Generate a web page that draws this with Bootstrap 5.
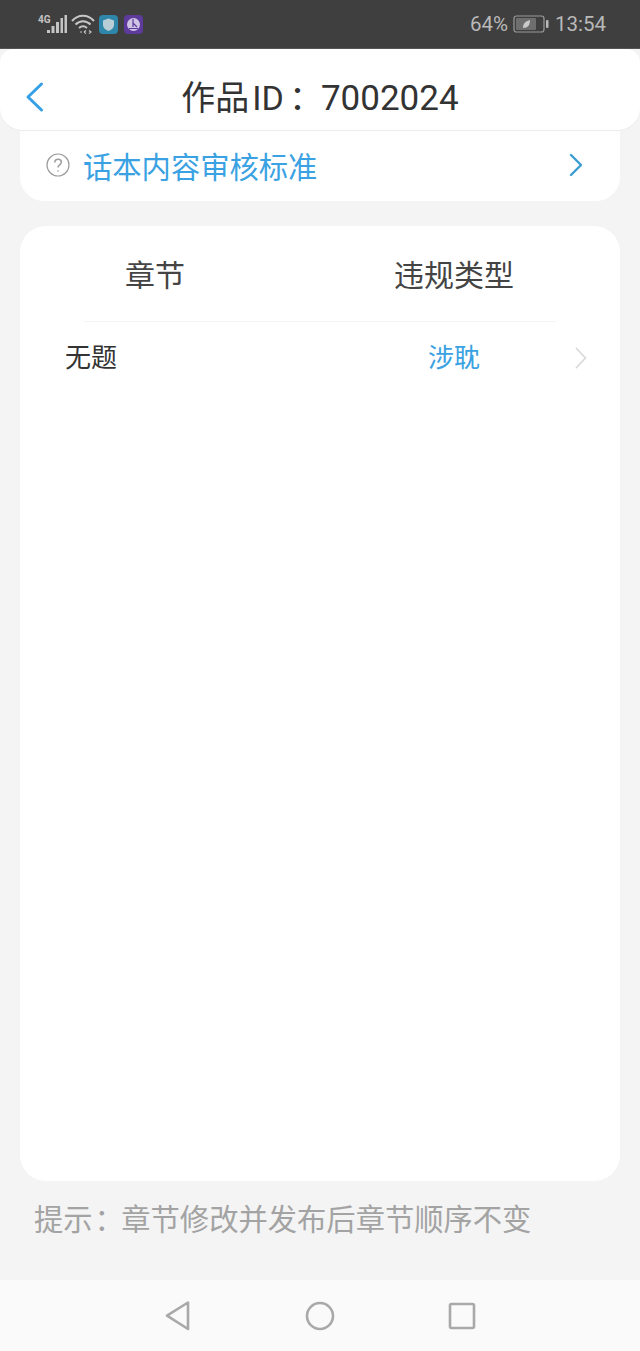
<!DOCTYPE html>
<html lang="zh">
<head>
<meta charset="utf-8">
<title>作品ID</title>
<link href="https://cdn.jsdelivr.net/npm/bootstrap@5.3.0/dist/css/bootstrap.min.css" rel="stylesheet">
<style>
html,body{height:1351px;overflow:hidden}
body{background:#f4f4f4;font-family:Roboto,"Noto Sans CJK SC",sans-serif;color:#333;width:640px}
.phone-status{height:49px;background:#3f3f3f;color:#b9b9b9;padding:0 34px 0 38px;border-bottom:1px solid #555}
.status-4g{font-size:10px;font-weight:700;line-height:1;align-self:flex-start;margin-top:15px;margin-right:-6px;color:#c4c4c4}
.status-pct{font-size:20.500px;line-height:1}
.status-time{font-size:20.500px;line-height:1;margin-left:6px}
.status-wifi{margin-left:2px}
.status-shield{margin-left:4px}
.status-app{margin-left:6px}
.status-batt{margin-left:5px}
.title-bar{height:81px;background:#fff;border-radius:14px 14px 22px 22px;position:relative;z-index:2;box-shadow:0 1px 0 #ececec;padding-top:18px}
.title-back{position:absolute;left:25px;top:32px}
.title-text{font-size:34px;line-height:1;color:#333}
.title-id{margin-left:3px}
.title-colon{font-feature-settings:"palt";margin:0 15px 0 5px}
.title-num{font-size:35px}
.notice-row{height:71px;margin:0 20px;background:#fff;border-radius:0 0 24px 24px;padding:0 37px 2px 26px}
.notice-text{font-size:29.300px;line-height:1;color:#3aa2e2;margin-left:13px;padding-top:9px}
.panel-main{margin:25px 20px 0;height:955px;background:#fff;border-radius:26px}
.panel-head{height:96px;margin:0 64px 0 64px;padding:5px 42px 0 41px;border-bottom:1px solid #f4f4f4;font-size:30px;line-height:1;color:#444}
.panel-row{height:72px;padding:0 33px 0 45px;font-size:26px;line-height:1;color:#333}
.violate-type{color:#3aa2e2;margin-left:auto;margin-right:95px}
.hint-text{font-size:29.300px;line-height:1;color:#a3a3a3;padding:25px 0 0 34px;height:99px;white-space:nowrap}
.hint-colon{font-feature-settings:"palt";margin:0 12px 0 2px}
.nav-bottom{height:71px;background:#fafafa;padding-left:163px}
.nav-home{margin:0 113px 0 114px}
</style>
</head>
<body>
<div class="phone-status d-flex align-items-center">
  <span class="status-4g">4G</span>
  <svg width="24" height="22" viewBox="4 0 24 22" fill="#c4c4c4"><rect x="6" y="17" width="3" height="3"/><rect x="10.500" y="13" width="3" height="7"/><rect x="15" y="9" width="3" height="11"/><rect x="19.500" y="5" width="2.500" height="15"/><rect x="23.500" y="2" width="2.500" height="18"/></svg>
  <svg class="status-wifi" width="24" height="22" viewBox="0 0 24 22" fill="none" stroke="#c8c8c8" stroke-width="2"><path d="M1 8C7 1 17 1 23 8"/><path d="M4.500 11.500C9 7 15 7 19.500 11.500"/><path d="M8 15C10.500 12.800 13.500 12.800 16 15"/><path d="M9 19h2M13 19l2-1.500M13 19l2 1.500M18 17.500l2 1.500-2 1.500" stroke-width="1.200"/></svg>
  <svg class="status-shield" width="19" height="19" viewBox="0 0 19 19"><rect width="19" height="19" rx="4" fill="#2e87aa"/><path d="M9.500 3.500l5.500 2v4.500c0 3-2.500 5-5.500 6-3-1-5.500-3-5.500-6V5.500z" fill="#b9cdd6"/></svg>
  <svg class="status-app" width="19" height="19" viewBox="0 0 19 19"><rect width="19" height="19" rx="4" fill="#5d3a9c"/><circle cx="9.500" cy="9.500" r="6.500" fill="#cfc4e4"/><path d="M9 4v8M5 13.500h9M9 8l4 4" stroke="#5d3a9c" stroke-width="1.200" fill="none"/></svg>
  <span class="status-pct ms-auto">64%</span>
  <svg class="status-batt" width="36" height="18" viewBox="0 0 36 18"><rect x="1" y="1" width="30" height="16" rx="2.500" fill="#3f3f3f" stroke="#9a9a9a" stroke-width="1.200"/><rect x="3" y="3" width="20" height="12" rx="1" fill="#6e6e6e"/><path d="M10 13c0-5 3-7 7-8 0 5-2 8-7 8z" fill="#c9c9c9"/><rect x="33" y="5" width="2.500" height="8" rx="1" fill="#b9b9b9"/></svg>
  <span class="status-time">13:54</span>
</div>

<div class="title-bar d-flex align-items-center justify-content-center">
  <svg class="title-back" width="19" height="32" viewBox="0 0 19 32" fill="none" stroke="#36a0e6" stroke-width="3" stroke-linecap="round" stroke-linejoin="round"><path d="M16.500 3L3 16L16.500 29"/></svg>
  <span class="title-text">作品<span class="title-id">ID</span><span class="title-colon">：</span><span class="title-num">7002024</span></span>
</div>

<div class="notice-row d-flex align-items-center">
  <svg width="24" height="24" viewBox="0 0 24 24" fill="none" stroke="#9c9c9c" stroke-width="1.200"><circle cx="12" cy="12" r="11"/><path d="M8.800 9.500c0-2 1.500-3.300 3.300-3.300s3.200 1.200 3.200 3c0 2.600-3.300 2.600-3.300 5.300" stroke-width="1.500"/><circle cx="12" cy="18" r=".8" fill="#9c9c9c" stroke="none"/></svg>
  <span class="notice-text">话本内容审核标准</span>
  <svg class="ms-auto" width="14" height="24" viewBox="0 0 14 24" fill="none" stroke="#3a9dd2" stroke-width="2.400" stroke-linecap="round" stroke-linejoin="round"><path d="M2 2l10 10L2 22"/></svg>
</div>

<div class="panel-main">
  <div class="panel-head d-flex align-items-center justify-content-between">
    <span>章节</span>
    <span>违规类型</span>
  </div>
  <div class="panel-row d-flex align-items-center">
    <span>无题</span>
    <span class="violate-type">涉耽</span>
    <svg width="12" height="22" viewBox="0 0 12 22" fill="none" stroke="#d9d9d9" stroke-width="1.800" stroke-linecap="round" stroke-linejoin="round"><path d="M1.500 1.500L10.500 11L1.500 20.500"/></svg>
  </div>
</div>

<div class="hint-text">提示<span class="hint-colon">：</span>章节修改并发布后章节顺序不变</div>

<div class="nav-bottom d-flex align-items-center">
  <svg width="28" height="32" viewBox="0 0 28 32" fill="none" stroke="#a9a9a9" stroke-width="2.600" stroke-linejoin="round"><path d="M25 2.500V29L4 15.700z"/></svg>
  <svg class="nav-home" width="30" height="30" viewBox="0 0 30 30" fill="none" stroke="#a9a9a9" stroke-width="2.600"><circle cx="15" cy="15" r="13"/></svg>
  <svg width="28" height="28" viewBox="0 0 28 28" fill="none" stroke="#a9a9a9" stroke-width="2.600" stroke-linejoin="round"><rect x="2" y="2" width="24" height="24" rx="1.500"/></svg>
</div>
<script src="https://cdn.jsdelivr.net/npm/bootstrap@5.3.0/dist/js/bootstrap.bundle.min.js"></script>
</body>
</html>
